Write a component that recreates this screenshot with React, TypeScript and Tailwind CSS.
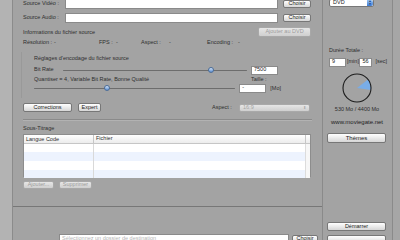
import React from 'react';

type BtnProps = { children: React.ReactNode; className?: string; disabled?: boolean };

function Btn({ children, className = '', disabled }: BtnProps) {
  return (
    <div
      className={
        'flex shrink-0 items-center justify-center rounded-[2px] border bg-linear-to-b leading-none ' +
        (disabled
          ? 'border-[#a8a8a8] from-[#e6e6e6] to-[#cfcfcf] text-[#9c9c9c] '
          : 'border-[#777] from-white to-[#d6d6d6] text-[#222] ') +
        className
      }
    >
      {children}
    </div>
  );
}

function Field({ className = '', children }: { className?: string; children?: React.ReactNode }) {
  return (
    <div className={'flex shrink-0 items-center border border-[#8a8a8a] bg-white px-[2px] leading-none text-[#222] ' + className}>
      {children}
    </div>
  );
}

function Slider({ thumb, className = '' }: { thumb: number; className?: string }) {
  return (
    <div className={'relative h-[3px] ' + className}>
      <div className="absolute inset-x-0 top-[1px] h-[1.5px] rounded-full bg-[#6d6d6d]" />
      <div
        className="absolute top-[-2px] h-[6px] w-[6px] rounded-full border border-[#4a6d9a] bg-linear-to-b from-[#d7e6f7] to-[#5e8fd0]"
        style={{ left: thumb }}
      />
    </div>
  );
}

function Pie() {
  const cx = 15;
  const cy = 15;
  const r = 14;
  const a1 = (-8 * Math.PI) / 180;
  const a2 = (38 * Math.PI) / 180;
  const p = (a: number) => `${cx + r * Math.cos(a)},${cy - r * Math.sin(a)}`;
  return (
    <svg width="30" height="30" viewBox="0 0 30 30">
      <path d={`M${cx},${cy} L${p(a1)} A${r},${r} 0 0 0 ${p(a2)} Z`} fill="#79ade8" />
      <circle cx={cx} cy={cy} r={r} fill="none" stroke="#1c1c1c" strokeWidth="1.1" />
    </svg>
  );
}

export default function App() {
  return (
    <div className="flex h-[240px] w-[400px] overflow-hidden bg-[#a3a3a3] font-['Liberation_Sans',Arial,sans-serif] text-[5.5px] leading-none text-[#2e2e2e]">
      <div className="w-[13px] shrink-0 border-r border-[#8b8b8b] bg-[#b3b3b3]" />

      <div className="flex w-[309px] shrink-0 flex-col">
        <div className="flex h-[207px] shrink-0 flex-col border-b border-[#777] pl-[10px] pr-[10px]">
          <div className="mt-[-1px] flex h-[10px] items-center">
            <span className="w-[42px]">Source Vidéo :</span>
            <Field className="h-[10px] w-[213px]" />
            <Btn className="ml-[5px] h-[8px] w-[28px]">Choisir</Btn>
          </div>
          <div className="mt-[4px] flex h-[10px] items-center">
            <span className="w-[42px]">Source Audio :</span>
            <Field className="h-[10px] w-[213px]" />
            <Btn className="ml-[5px] h-[8px] w-[28px]">Choisir</Btn>
          </div>
          <div className="mt-[4px] flex h-[10px] items-center justify-between pr-[1px]">
            <span className="mt-[1px]">Informations du fichier source</span>
            <Btn disabled className="h-[10px] w-[53px]">Ajouter au DVD</Btn>
          </div>
          <div className="mt-[3px] flex h-[6px] items-center">
            <span className="w-[31px]">Résolution :</span>
            <span className="w-[45px]">-</span>
            <span className="w-[17px]">FPS :</span>
            <span className="w-[25px]">-</span>
            <span className="w-[28px]">Aspect :</span>
            <span className="w-[38px]">-</span>
            <span className="w-[31px]">Encoding :</span>
            <span>-</span>
          </div>

          <div className="ml-[-2px] mt-[6px] flex h-[46px] w-[260px] flex-col border-l border-[#999] pl-[12px]">
            <span className="mt-[4px]">Réglages d'encodage du fichier source</span>
            <div className="mt-[4px] flex h-[9px] items-center">
              <span className="w-[29px]">Bit Rate</span>
              <Slider thumb={145} className="w-[184px]" />
              <Field className="ml-[4px] h-[9px] w-[27px]">7500</Field>
            </div>
            <div className="mt-[2px] flex h-[7px] items-center">
              <span className="w-[217px]">Quantiser = 4, Variable Bit Rate, Bonne Qualité</span>
              <span>Taille :</span>
            </div>
            <div className="flex h-[9px] items-center">
              <Slider thumb={70} className="w-[213px]" />
              <Field className="ml-[4px] h-[9px] w-[27px]">-</Field>
              <span className="ml-[4px] mt-[2px]">[Mo]</span>
            </div>
          </div>

          <div className="mt-[5px] flex h-[9px] items-center">
            <Btn className="h-[9px] w-[49px]">Corrections</Btn>
            <Btn className="ml-[6px] h-[9px] w-[23px]">Expert</Btn>
            <span className="ml-[111px] w-[27px]">Aspect :</span>
            <div className="flex h-[8px] w-[71px] items-center justify-between rounded-[2px] border border-[#a9a9a9] bg-linear-to-b from-[#e6e6e6] to-[#cfcfcf] px-[3px] text-[#a5a5a5]">
              <span>16:9</span>
              <span className="text-[4px]">⬍</span>
            </div>
          </div>

          <div className="mt-[7px] h-[1px] w-[289px] bg-[#8a8a8a]" />
          <div className="h-[1px] w-[289px] bg-[#b2b2b2]" />

          <span className="mt-[5px]">Sous-Titrage</span>

          <div className="mt-[2px] flex h-[43px] w-[288px] flex-col border border-[#8d8d8d] bg-white">
            <div className="flex h-[9px] shrink-0 items-center border-b border-[#c6c6c6] bg-linear-to-b from-white to-[#ececec]">
              <span className="w-[70px] border-r border-[#c6c6c6] pl-[2px] leading-[8px]">Langue Code</span>
              <span className="pl-[2px]">Fichier</span>
              <div className="ml-auto h-full w-[5px] border-l border-[#c6c6c6]" />
            </div>
            <div className="flex flex-1">
              <div className="w-[70px] border-r border-[#d9d9d9]">
                <div className="h-[8px] bg-white" />
                <div className="h-[9px] bg-[#edf3fe]" />
                <div className="h-[9px] bg-white" />
                <div className="h-[8px] bg-[#edf3fe]" />
              </div>
              <div className="flex-1">
                <div className="h-[8px] bg-white" />
                <div className="h-[9px] bg-[#edf3fe]" />
                <div className="h-[9px] bg-white" />
                <div className="h-[8px] bg-[#edf3fe]" />
              </div>
              <div className="w-[5px] border-l border-[#dcdcdc] bg-[#f7f7f7]" />
            </div>
          </div>

          <div className="mt-[4px] flex h-[9px] items-center">
            <Btn disabled className="h-[8px] w-[31px]">Ajouter...</Btn>
            <Btn disabled className="ml-[5px] h-[8px] w-[33px]">Supprimer</Btn>
          </div>
        </div>

        <div className="mt-[15px] h-[1px] bg-[#7e7e7e]" />
        <div className="mt-[4px] h-[1px] bg-[#b0b0b0]" />
        <div className="mt-[8px] flex items-center pl-[46px]">
          <Field className="h-[10px] w-[230px] text-[#b5b5b5]">Sélectionnez un dossier de destination</Field>
          <Btn className="ml-[3px] h-[9px] w-[26px]">Choisir</Btn>
        </div>
      </div>

      <div className="flex w-[70px] shrink-0 flex-col border-l border-[#8a8a8a] pl-[4px] pr-[5px]">
        <div className="ml-[2px] mt-[-1px] flex h-[9px] w-[45px] items-center justify-between rounded-[2px] border border-[#777] bg-white pl-[3px]">
          <span className="text-[#222]">DVD</span>
          <div className="flex h-full w-[6px] flex-col items-center justify-center rounded-r-[2px] bg-linear-to-b from-[#9cc2ef] to-[#3b7ad3] text-[3px] leading-[3px] text-[#13305c]">
            <span>▲</span>
            <span>▼</span>
          </div>
        </div>

        <span className="ml-[2px] mt-[41px]">Durée Totale :</span>
        <div className="ml-[2px] mt-[4px] flex h-[9px] items-center">
          <Field className="h-[9px] w-[17px]">9</Field>
          <span className="ml-[1px] w-[13px]">[min]</span>
          <Field className="h-[9px] w-[13px]">56</Field>
          <span className="ml-[3px]">[sec]</span>
        </div>

        <div className="mt-[6px] flex justify-center">
          <Pie />
        </div>
        <span className="mt-[4px] text-center">530 Mo / 4400 Mo</span>
        <span className="mt-[7px] text-center text-[6px] text-[#1d1d1d]">www.moviegate.net</span>

        <div className="mt-[5px] h-[1px] bg-[#8a8a8a]" />
        <Btn className="mt-[3px] h-[10px] w-[59px] text-[6px]">Thèmes</Btn>
        <div className="mt-[7px] h-[1px] bg-[#8a8a8a]" />

        <div className="mt-[64px] h-[1px] bg-[#8a8a8a]" />
        <Btn className="mt-[8px] h-[9px] w-[59px]">Démarrer</Btn>
        <Btn className="mt-[4px] h-[9px] w-[59px]">{' '}</Btn>
      </div>

      <div className="flex-1 border-l border-[#8a8a8a] bg-[#a6a6a6]" />
    </div>
  );
}
